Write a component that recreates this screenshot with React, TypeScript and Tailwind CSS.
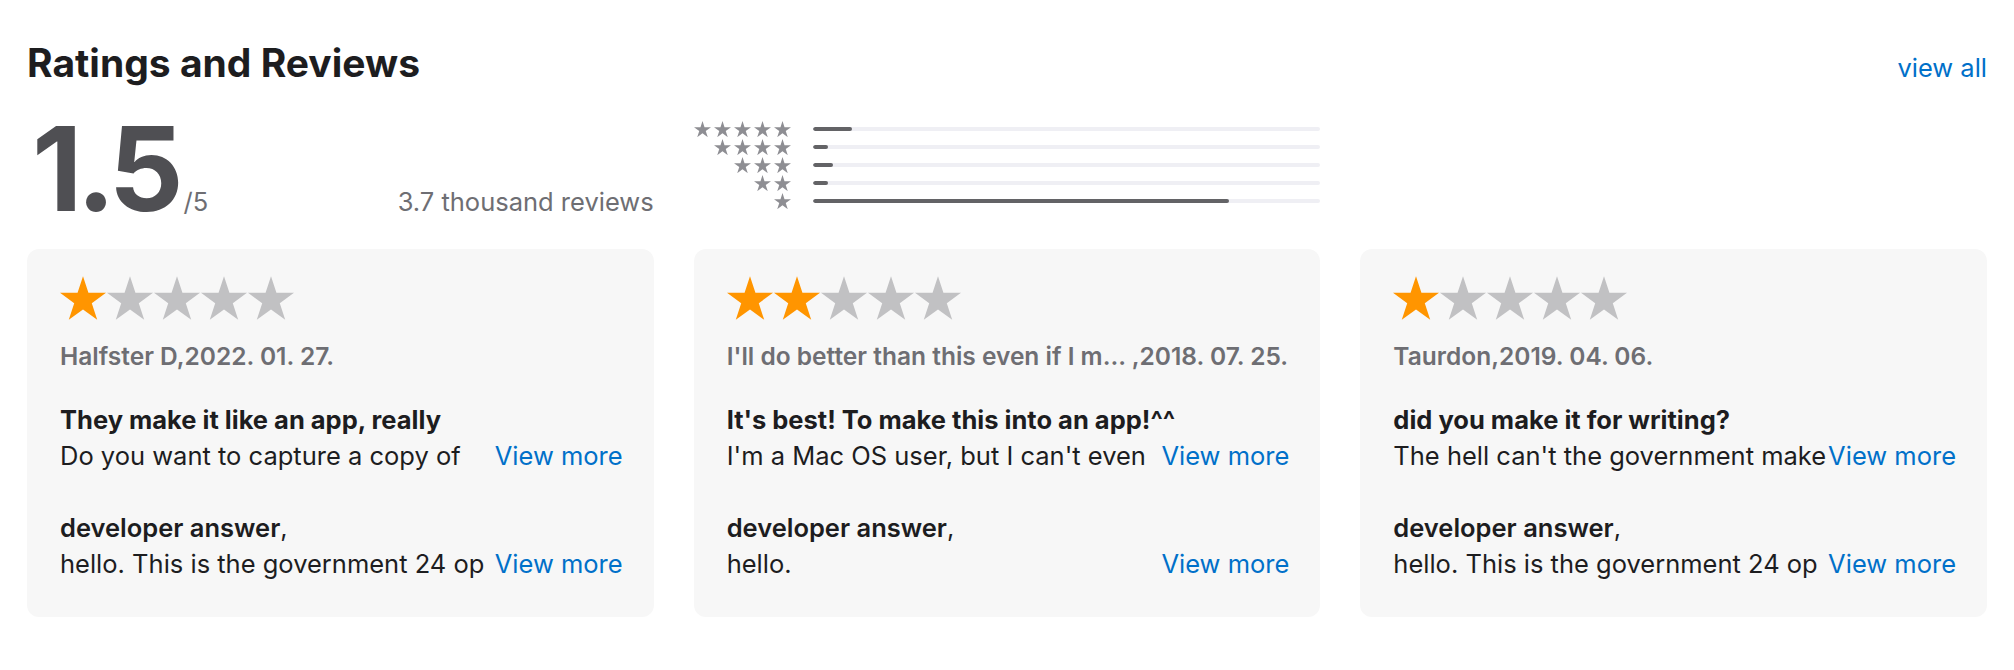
import React from "react";

const STAR_POINTS =
  "50,0 61.8,36.32 100,36.33 69.1,58.78 80.9,95.1 50,72.65 19.1,95.1 30.9,58.78 0,36.33 38.2,36.32";

function Star({ className, color }: { className: string; color: string }) {
  return (
    <svg viewBox="0 0 100 95.1" className={className} aria-hidden="true">
      <polygon points={STAR_POINTS} fill={color} />
    </svg>
  );
}

const histogram = [
  { stars: 5, pct: 7.7 },
  { stars: 4, pct: 3 },
  { stars: 3, pct: 4 },
  { stars: 2, pct: 3 },
  { stars: 1, pct: 82 },
];

type Review = {
  rating: number;
  author: string;
  title: string;
  body: string;
  reply: string;
};

const reviews: Review[] = [
  {
    rating: 1,
    author: "Halfster D,2022. 01. 27.",
    title: "They make it like an app, really",
    body: "Do you want to capture a copy of",
    reply: "hello. This is the government 24 op",
  },
  {
    rating: 2,
    author: "I'll do better than this even if I m... ,2018. 07. 25.",
    title: "It's best! To make this into an app!^^",
    body: "I'm a Mac OS user, but I can't even",
    reply: "hello.",
  },
  {
    rating: 1,
    author: "Taurdon,2019. 04. 06.",
    title: "did you make it for writing?",
    body: "The hell can't the government make",
    reply: "hello. This is the government 24 op",
  },
];

function ReviewCard({ r }: { r: Review }) {
  return (
    <div className="rounded-[12px] bg-[#f7f7f7] pl-[33px] pr-[31px] pt-[27px] pb-[35px]">
      <div className="flex gap-[1px]">
        {[0, 1, 2, 3, 4].map((i) => (
          <Star
            key={i}
            className="w-[46px] h-[44px]"
            color={i < r.rating ? "#ff9500" : "#c1c1c3"}
          />
        ))}
      </div>
      <div className="mt-[18px] text-[24.5px] leading-[36px] font-semibold text-[#6e6e73] whitespace-nowrap">
        {r.author}
      </div>
      <div className="mt-[28px] text-[25.5px] leading-[36px] font-bold text-[#1d1d1f] whitespace-nowrap">
        {r.title}
      </div>
      <div className="flex items-baseline text-[25.5px] leading-[36px]">
        <div className="flex-1 min-w-0 overflow-hidden whitespace-nowrap text-[#1d1d1f]">
          {r.body}
        </div>
        <a className="shrink-0 text-[#0070c9] ml-[2px]">View more</a>
      </div>
      <div className="mt-[36px] text-[25.5px] leading-[36px] text-[#1d1d1f]">
        <span className="font-semibold">developer answer</span>,
      </div>
      <div className="flex items-baseline text-[25.5px] leading-[36px]">
        <div className="flex-1 min-w-0 overflow-hidden whitespace-nowrap text-[#1d1d1f]">
          {r.reply}
        </div>
        <a className="shrink-0 text-[#0070c9] ml-[2px]">View more</a>
      </div>
    </div>
  );
}

export default function App() {
  return (
    <div className="min-h-[670px] bg-white px-[27px] pt-[40px] font-['Inter',sans-serif] antialiased">
      <div className="flex items-baseline justify-between">
        <h2 className="text-[39px] leading-[46px] font-bold text-[#1d1d1f]">
          Ratings and Reviews
        </h2>
        <a className="text-[25.5px] leading-[36px] text-[#0070c9]">view all</a>
      </div>

      <div className="mt-[24px] grid grid-cols-3 gap-x-[40px]">
        <div className="flex items-baseline justify-between">
          <div className="flex items-baseline pl-[5px]">
            <span className="text-[117px] leading-[117px] font-bold text-[#4f4f53] tracking-[-6px]">
              1.5
            </span>
            <span className="ml-[6px] text-[25.5px] leading-[30px] text-[#6e6e73]">/5</span>
          </div>
          <span className="text-[25.5px] leading-[30px] text-[#6e6e73]">3.7 thousand reviews</span>
        </div>

        <div className="pt-[10px]">
          {histogram.map((row) => (
            <div key={row.stars} className="flex h-[18px] items-center">
              <div className="flex w-[97px] justify-end gap-[3px]">
                {Array.from({ length: row.stars }).map((_, i) => (
                  <Star key={i} className="w-[17px] h-[16.2px]" color="#8e8e93" />
                ))}
              </div>
              <div className="ml-[22px] flex-1 h-[4px] rounded-full bg-[#efeff4] overflow-hidden">
                <div
                  className="h-full rounded-full bg-[#636366]"
                  style={{ width: `${row.pct}%` }}
                />
              </div>
            </div>
          ))}
        </div>
        <div />
      </div>

      <div className="mt-[22px] grid grid-cols-3 gap-x-[40px]">
        {reviews.map((r, i) => (
          <ReviewCard key={i} r={r} />
        ))}
      </div>
    </div>
  );
}
